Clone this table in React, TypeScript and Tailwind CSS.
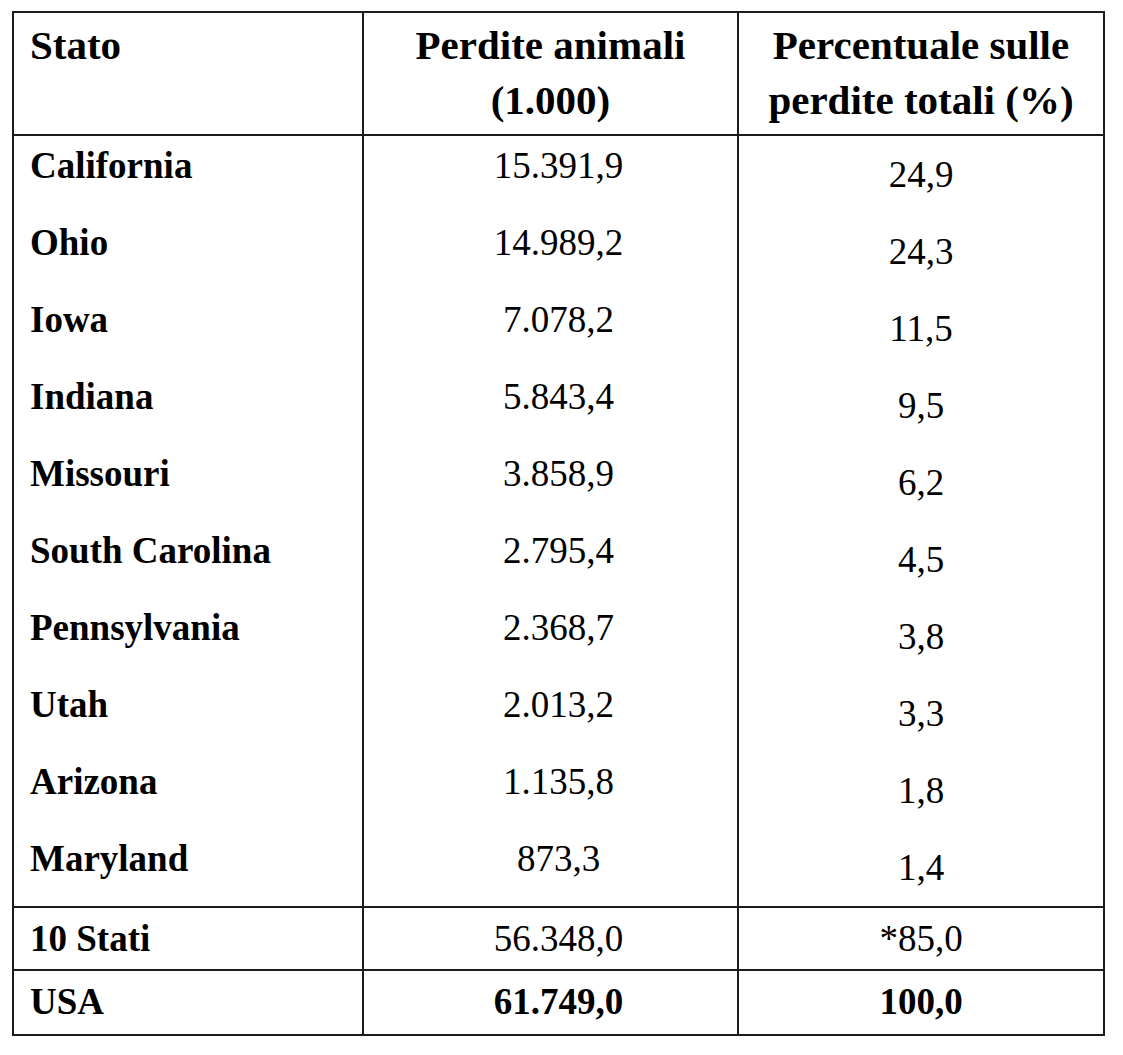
import React from "react";

const rows: [string, string, string][] = [
  ["California", "15.391,9", "24,9"],
  ["Ohio", "14.989,2", "24,3"],
  ["Iowa", "7.078,2", "11,5"],
  ["Indiana", "5.843,4", "9,5"],
  ["Missouri", "3.858,9", "6,2"],
  ["South Carolina", "2.795,4", "4,5"],
  ["Pennsylvania", "2.368,7", "3,8"],
  ["Utah", "2.013,2", "3,3"],
  ["Arizona", "1.135,8", "1,8"],
  ["Maryland", "873,3", "1,4"],
];

export default function App() {
  return (
    <div
      className="min-h-[1055px] w-[1123px] bg-white pt-[11px] pl-[12px] text-black"
      style={{ fontFamily: '"Liberation Serif", "Times New Roman", serif' }}
    >
      <div className="w-[1093px] border-2 border-[#1c1c1c]">
        {/* header */}
        <div className="grid h-[123px] grid-cols-[350px_375px_1fr] border-b-2 border-[#1c1c1c] text-[41px] font-bold leading-[55px]">
          <div className="border-r-2 border-[#1c1c1c] pl-[16px] pt-[5px]">Stato</div>
          <div className="border-r-2 border-[#1c1c1c] pt-[5px] text-center">
            Perdite animali
            <br />
            (1.000)
          </div>
          <div className="pt-[5px] text-center">
            Percentuale sulle
            <br />
            perdite totali (%)
          </div>
        </div>
        {/* body */}
        <div className="border-b-2 border-[#1c1c1c]">
          {rows.map(([s, a, p]) => (
            <div key={s} className="grid h-[77px] grid-cols-[350px_375px_1fr] text-[37px] leading-[44px]">
              <div className="border-r-2 border-[#1c1c1c] pl-[16px] pt-[8px] font-bold">{s}</div>
              <div className="border-r-2 border-[#1c1c1c] pl-[16px] pt-[8px] text-center">{a}</div>
              <div className="pt-[17px] text-center">{p}</div>
            </div>
          ))}
        </div>
        {/* 10 Stati */}
        <div className="grid h-[63px] grid-cols-[350px_375px_1fr] border-b-2 border-[#1c1c1c] text-[37px] leading-[44px]">
          <div className="border-r-2 border-[#1c1c1c] pl-[16px] pt-[9px] font-bold">10 Stati</div>
          <div className="border-r-2 border-[#1c1c1c] pl-[16px] pt-[9px] text-center">56.348,0</div>
          <div className="pt-[9px] text-center">*85,0</div>
        </div>
        {/* USA */}
        <div className="grid h-[63px] grid-cols-[350px_375px_1fr] text-[37px] font-bold leading-[44px]">
          <div className="border-r-2 border-[#1c1c1c] pl-[16px] pt-[9px]">USA</div>
          <div className="border-r-2 border-[#1c1c1c] pl-[16px] pt-[9px] text-center">61.749,0</div>
          <div className="pt-[9px] text-center">100,0</div>
        </div>
      </div>
    </div>
  );
}
